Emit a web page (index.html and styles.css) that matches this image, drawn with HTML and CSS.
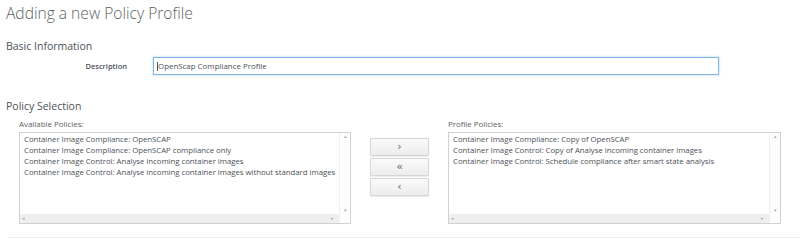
FILE: index.html
```html
<!DOCTYPE html>
<html>
<head>
<meta charset="utf-8">
<link rel="stylesheet" href="styles.css">
</head>
<body>
<div class="page">
  <h1 class="title">Adding a new Policy Profile</h1>
  <h2 class="section">Basic Information</h2>
  <div class="form-row">
    <label class="label">Description</label>
    <div class="input"><span class="caret"></span>OpenScap Compliance Profile</div>
  </div>
  <h2 class="section section-2">Policy Selection</h2>
  <div class="selection">
    <div class="col col-left">
      <div class="col-label">Available Policies:</div>
      <div class="listbox">
        <div class="items">
          <div>Container Image Compliance: OpenSCAP</div>
          <div>Container Image Compliance: OpenSCAP compliance only</div>
          <div>Container Image Control: Analyse incoming container images</div>
          <div>Container Image Control: Analyse incoming container images without standard images</div>
        </div>
        <div class="vscroll"><span class="arr">&#9652;</span><span class="arr">&#9662;</span></div>
        <div class="hscroll"><span class="arr">&#9666;</span><span class="arr">&#9656;</span></div>
        <div class="corner"></div>
      </div>
    </div>
    <div class="buttons">
      <button class="btn">&#8250;</button>
      <button class="btn">&#171;</button>
      <button class="btn">&#8249;</button>
    </div>
    <div class="col col-right">
      <div class="col-label">Profile Policies:</div>
      <div class="listbox">
        <div class="items">
          <div>Container Image Compliance: Copy of OpenSCAP</div>
          <div>Container Image Control: Copy of Analyse incoming container images</div>
          <div>Container Image Control: Schedule compliance after smart state analysis</div>
        </div>
        <div class="vscroll"><span class="arr">&#9652;</span><span class="arr">&#9662;</span></div>
        <div class="hscroll"><span class="arr">&#9666;</span><span class="arr">&#9656;</span></div>
        <div class="corner"></div>
      </div>
    </div>
  </div>
  <div class="rule"></div>
</div>
</body>
</html>
```
FILE: styles.css
```css
html, body {
  margin: 0;
  padding: 0;
  background: #fff;
}
body {
  font-family: "Open Sans", "Liberation Sans", sans-serif;
  color: #4d5258;
  width: 800px;
  height: 241px;
  overflow: hidden;
}
.page {
  padding: 0 0 0 6px;
}
.title {
  margin: 0;
  padding-top: 1px;
  font-size: 15.6px;
  font-weight: 300;
  line-height: 24px;
  color: #5a5f64;
}
.section {
  margin: 14px 0 0 0;
  font-size: 10.5px;
  font-weight: 400;
  line-height: 14px;
  color: #4d5258;
}
.section-2 {
  margin-top: 24px;
}
.form-row {
  display: flex;
  align-items: center;
  margin-top: 4px;
  height: 18px;
}
.label {
  width: 121px;
  text-align: right;
  font-size: 7.5px;
  font-weight: 600;
  color: #4d5258;
}
.input {
  margin-left: 26px;
  width: 561px;
  height: 16px;
  border: 1px solid #7fb8e6;
  box-shadow: 0 0 2px rgba(102,175,233,0.6);
  font-size: 7.9px;
  line-height: 16px;
  padding-left: 3px;
  color: #4d5258;
  display: flex;
  align-items: center;
}
.caret {
  display: inline-block;
  width: 1px;
  height: 9px;
  background: #555;
}
.selection {
  display: flex;
  margin-top: 6px;
  padding-left: 13px;
  align-items: flex-start;
}
.col-label {
  font-size: 7.9px;
  line-height: 10px;
  height: 12px;
  color: #5a5f64;
  margin-bottom: 1px;
}
.col-left .listbox {
  width: 330px;
}
.col-right .listbox {
  width: 331px;
}
.listbox {
  position: relative;
  height: 90px;
  border: 1px solid #d1d1d1;
  background: #fff;
}
.items {
  padding: 1px 0 0 4px;
  font-size: 7.8px;
  letter-spacing: -0.03px;
  line-height: 11px;
  color: #4d5258;
  white-space: nowrap;
}
.vscroll {
  position: absolute;
  top: 0;
  right: 0;
  width: 10px;
  bottom: 9px;
  background: #fdfdfd;
  display: flex;
  flex-direction: column;
  justify-content: space-between;
  align-items: center;
  border-left: 1px solid #f0f0f0;
}
.hscroll {
  position: absolute;
  left: 0;
  right: 10px;
  bottom: 0;
  height: 9px;
  background: #efefef;
  display: flex;
  justify-content: space-between;
  align-items: center;
  padding: 0 6px 0 2px;
}
.corner {
  position: absolute;
  right: 0;
  bottom: 0;
  width: 10px;
  height: 9px;
  background: #fff;
}
.arr {
  font-size: 5px;
  line-height: 7px;
  color: #aaa;
}
.buttons {
  display: flex;
  flex-direction: column;
  gap: 2px;
  margin: 19px 19px 0 19px;
}
.btn {
  width: 59px;
  height: 18px;
  border: 1px solid #d6d6d6;
  border-radius: 1px;
  background: linear-gradient(#fafafa, #ededed);
  box-shadow: 0 1px 1px rgba(0,0,0,0.08);
  font-family: "DejaVu Sans", sans-serif;
  font-size: 11px;
  line-height: 14px;
  color: #666;
  padding: 0;
}
.rule {
  margin: 13px 0 0 2px;
  height: 1px;
  background: #eeeeee;
}
```
